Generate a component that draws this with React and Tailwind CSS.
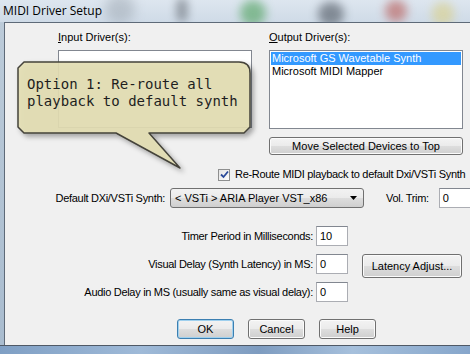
const ui = { fontFamily: '"Liberation Sans", Arial, sans-serif' }

function Btn({ className = '', def, children }) {
  return (
    <div
      className={`flex items-center justify-center rounded-[3px] border text-[11px] leading-none text-black bg-[linear-gradient(#f3f3f3,#ebebeb_48%,#dddddd_52%,#cfcfcf)] ${
        def ? 'border-[#3c7fb1] shadow-[inset_0_0_0_1px_#9fd0ee]' : 'border-[#707070] shadow-[inset_0_0_0_1px_#fbfbfb]'
      } ${className}`}
    >
      {children}
    </div>
  )
}

function Field({ className = '', children }) {
  return (
    <div className={`flex shrink-0 items-center border border-[#abadb3] border-t-[#828790] bg-white pl-[3px] text-[11px] ${className}`}>
      {children}
    </div>
  )
}

export default function App() {
  return (
    <div className="relative w-[470px] h-[354px] overflow-hidden bg-[#c7d4e2]" style={ui}>
      {/* Title bar (glass) */}
      <div className="relative h-[22px] overflow-hidden bg-[linear-gradient(#dde6ef,#cfdbe7)]">
        <div className="absolute left-[105px] top-[-6px] w-[30px] h-[30px] rounded-full bg-[#8c96a0] opacity-40 blur-[6px]" />
        <div className="absolute left-[176px] top-[-2px] w-[12px] h-[24px] rounded-full bg-[#4a5058] opacity-45 blur-[4px]" />
        <div className="absolute left-[240px] top-[0px] w-[26px] h-[26px] rounded-full bg-[#3f9a4c] opacity-55 blur-[5px]" />
        <div className="absolute left-[318px] top-[2px] w-[26px] h-[24px] rounded-full bg-[#3e4650] opacity-55 blur-[5px]" />
        <div className="absolute left-[385px] top-[0px] w-[22px] h-[22px] rounded-full bg-[#b54b45] opacity-55 blur-[5px]" />
        <div className="absolute left-[432px] top-[2px] w-[22px] h-[24px] rounded-full bg-[#d9cf86] opacity-60 blur-[5px]" />
        <div className="relative pl-[3px] pt-[4px] text-[12px] leading-[14px] text-black" style={{ fontFamily: '"Open Sans", "Liberation Sans", sans-serif' }}>
          MIDI Driver Setup
        </div>
      </div>

      <div className="flex">
        {/* left frame */}
        <div className="w-[4px] h-[323px] shrink-0 bg-[linear-gradient(#bccbd9,#a9bccf)]" />

        {/* Client area */}
        <div className="w-[480px] h-[323px] shrink-0 border-t border-l border-[#5e6a78] bg-[#f0f0f0] text-black">
          {/* driver lists */}
          <div className="flex gap-[17px] pl-[53px] pt-[8px]">
            <div className="flex w-[194px] flex-col">
              <div className="h-[13px] text-[11px] leading-[13px]">
                <span className="underline">I</span>nput Driver(s):
              </div>
              <div className="mt-[6px] h-[78px] border border-[#828790] bg-white" />
            </div>
            <div className="flex w-[194px] flex-col">
              <div className="h-[13px] text-[11px] leading-[13px]">
                <span className="underline">O</span>utput Driver(s):
              </div>
              <div className="mt-[6px] h-[79px] border border-[#828790] bg-white p-[1px] text-[11px] leading-[13px]">
                <div className="bg-[#3399ff] pl-[1px] text-white">Microsoft GS Wavetable Synth</div>
                <div className="pl-[1px]">Microsoft MIDI Mapper</div>
              </div>
              <Btn className="mt-[8px] h-[18px]">Move Selected Devices to Top</Btn>
            </div>
          </div>

          {/* reroute checkbox */}
          <div className="mt-[13px] flex h-[13px] items-center gap-[5px] pl-[213px]">
            <div className="flex h-[12px] w-[12px] shrink-0 items-center justify-center border border-[#8e8f8f] bg-[linear-gradient(135deg,#e4e4e4,#fdfdfd)]">
              <svg width="9" height="9" viewBox="0 0 9 9">
                <path d="M1 4.5 L3.5 7 L8 1.5" fill="none" stroke="#2a4a9a" strokeWidth="1.8" />
              </svg>
            </div>
            <span className="whitespace-nowrap text-[11px] leading-[13px] tracking-[-0.3px]">
              Re-Route MIDI playback to default Dxi/VSTi Synth
            </span>
          </div>

          {/* default synth */}
          <div className="mt-[7px] flex h-[20px] items-center">
            <div className="w-[160px] shrink-0 whitespace-nowrap text-right text-[11px] tracking-[-0.3px]">Default DXi/VSTi Synth:</div>
            <div className="ml-[5px] flex h-[20px] w-[194px] shrink-0 items-center justify-between rounded-[3px] border border-[#707070] bg-[linear-gradient(#f2f2f2,#ebebeb_48%,#dddddd_52%,#cfcfcf)] pl-[4px] pr-[6px] text-[11px]">
              <span className="whitespace-nowrap">&lt; VSTi &gt; ARIA Player VST_x86</span>
              <svg width="7" height="4" viewBox="0 0 7 4">
                <path d="M0 0 H7 L3.5 4 Z" fill="#000" />
              </svg>
            </div>
            <div className="ml-[22px] shrink-0 whitespace-nowrap text-[11px] tracking-[-0.3px]">Vol. Trim:</div>
            <Field className="ml-[10px] h-[20px] w-[50px]">0</Field>
          </div>

          {/* timer */}
          <div className="mt-[18px] flex h-[20px] items-center">
            <div className="w-[308px] shrink-0 text-right text-[11px] tracking-[-0.3px]">Timer Period in Milliseconds:</div>
            <Field className="ml-[3px] h-[20px] w-[32px]">10</Field>
          </div>

          {/* visual delay */}
          <div className="mt-[8px] flex h-[24px] items-start">
            <div className="flex h-[20px] w-[308px] shrink-0 items-center justify-end text-[11px] tracking-[-0.3px]">
              Visual Delay (Synth Latency) in MS:
            </div>
            <Field className="ml-[3px] h-[20px] w-[32px]">0</Field>
            <Btn className="ml-[14px] h-[24px] w-[100px]">Latency Adjust...</Btn>
          </div>

          {/* audio delay */}
          <div className="mt-[4px] flex h-[20px] items-center">
            <div className="w-[308px] shrink-0 text-right text-[11px] tracking-[-0.3px]">
              Audio Delay in MS (usually same as visual delay):
            </div>
            <Field className="ml-[3px] h-[20px] w-[32px]">0</Field>
          </div>

          {/* dialog buttons */}
          <div className="mt-[17px] flex gap-[14px] pl-[172px]">
            <Btn def className="h-[20px] w-[57px]">OK</Btn>
            <Btn className="h-[20px] w-[57px]">Cancel</Btn>
            <Btn className="h-[20px] w-[57px]">Help</Btn>
          </div>
        </div>
      </div>

      {/* bottom frame */}
      <div className="h-[9px] border-t border-[#4f5966] bg-[linear-gradient(90deg,#7f9fc4,#9fbad8_30%,#7e9cc0_55%,#a6c0dc_75%,#86a6cb)]" />

      {/* callout balloon */}
      <svg className="pointer-events-none absolute left-0 top-0" width="470" height="354" viewBox="0 0 470 354">
        <defs>
          <filter id="sh" x="-20%" y="-20%" width="140%" height="160%">
            <feDropShadow dx="3" dy="3" stdDeviation="2.5" floodColor="#000" floodOpacity="0.35" />
          </filter>
        </defs>
        <path
          d="M24 62 L239 62 Q250 62 250 73 L250 127 L244 133 L149 133 L180 168 L116 133 L24 133 L18 127 L18 68 Z"
          fill="#e3deb3"
          fillOpacity="0.9"
          stroke="#44433a"
          strokeWidth="1.5"
          strokeLinejoin="round"
          filter="url(#sh)"
        />
      </svg>
      <div
        className="pointer-events-none absolute left-[27px] top-[76px] text-[14px] leading-[17px] text-[#1e1e1e] whitespace-pre"
        style={{ fontFamily: '"DejaVu Sans Mono", "Liberation Mono", monospace' }}
      >
        {'Option 1: Re-route all\nplayback to default synth'}
      </div>
    </div>
  )
}
